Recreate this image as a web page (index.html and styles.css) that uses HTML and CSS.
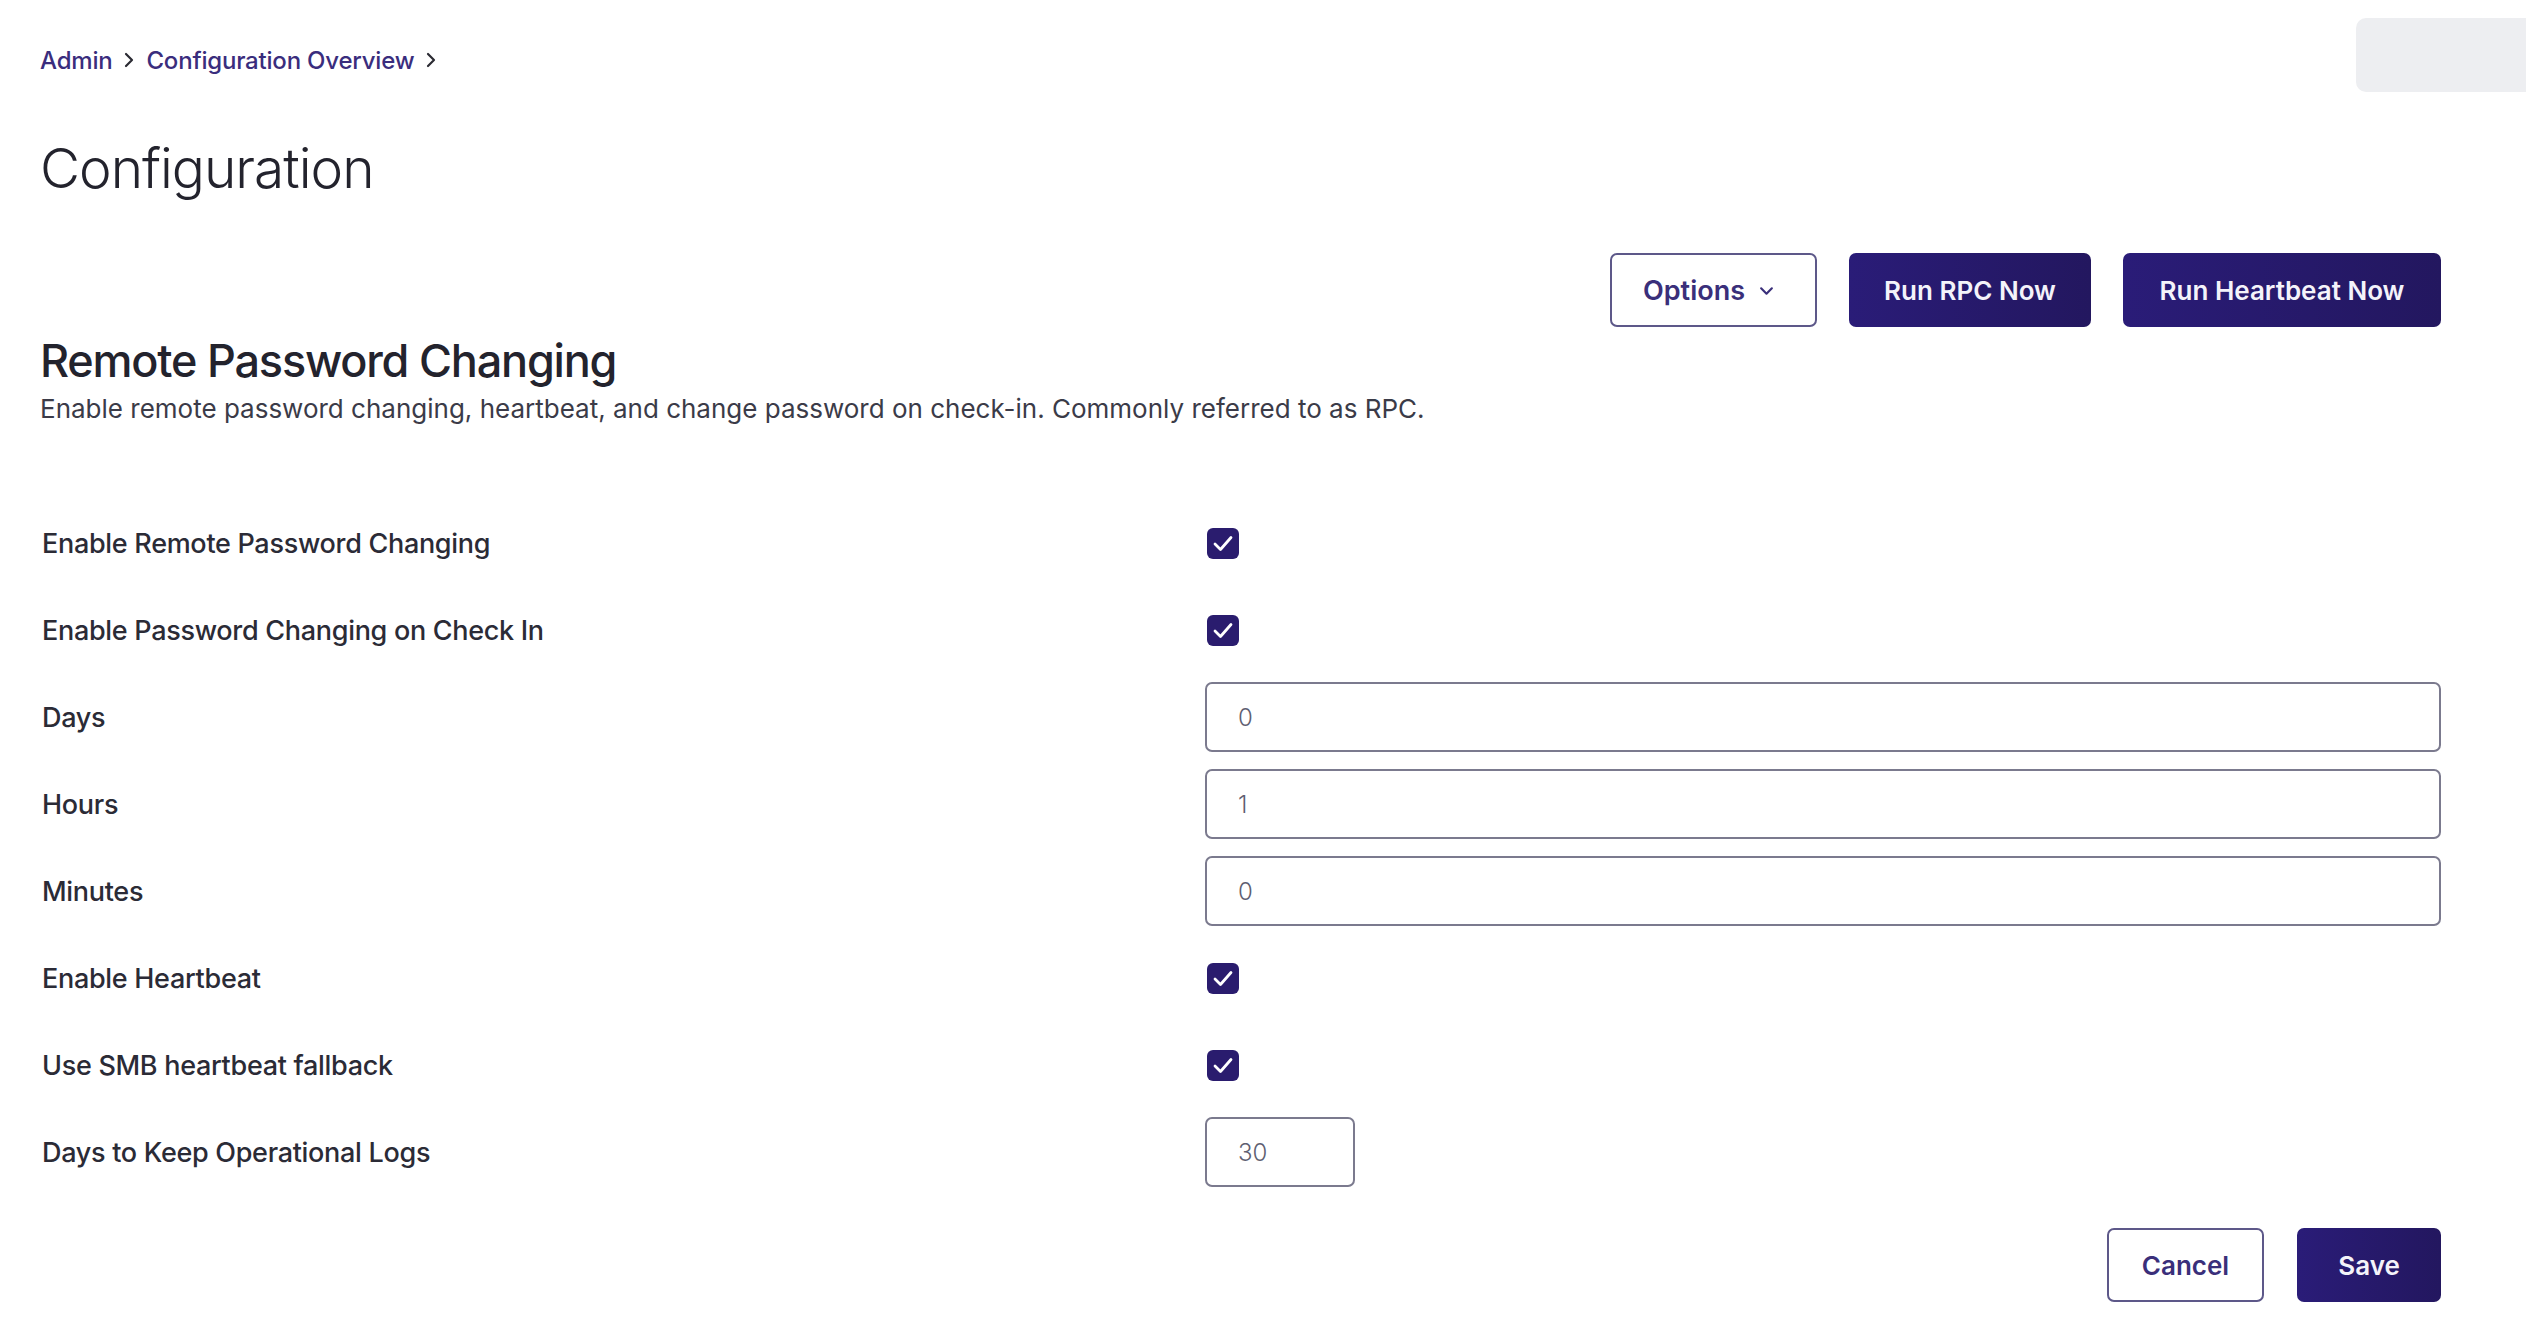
FILE: index.html
```html
<!DOCTYPE html>
<html lang="en">
<head>
<meta charset="utf-8">
<title>Configuration</title>
<link rel="stylesheet" href="styles.css">
</head>
<body>
<div class="page">
  <header class="topbar">
    <nav class="breadcrumb">
      <a class="crumb" href="#">Admin</a>
      <svg class="sep" viewBox="0 0 10 16" width="10" height="16"><polyline points="2,2 8,8 2,14" fill="none" stroke="#2b2b33" stroke-width="2.2" stroke-linecap="round" stroke-linejoin="round"/></svg>
      <a class="crumb" href="#">Configuration Overview</a>
      <svg class="sep" viewBox="0 0 10 16" width="10" height="16"><polyline points="2,2 8,8 2,14" fill="none" stroke="#2b2b33" stroke-width="2.2" stroke-linecap="round" stroke-linejoin="round"/></svg>
    </nav>
    <div class="search-stub"></div>
  </header>

  <h1 class="page-title">Configuration</h1>

  <div class="actions">
    <button class="btn btn-outline btn-options">Options
      <svg class="caret" viewBox="0 0 14 9" width="15" height="10"><polyline points="2,2 7,7 12,2" fill="none" stroke="#3a2f7a" stroke-width="2" stroke-linecap="round" stroke-linejoin="round"/></svg>
    </button>
    <button class="btn btn-primary btn-rpc">Run RPC Now</button>
    <button class="btn btn-primary btn-hb">Run Heartbeat Now</button>
  </div>

  <h2 class="section-title">Remote Password Changing</h2>
  <p class="section-desc">Enable remote password changing, heartbeat, and change password on check-in. Commonly referred to as RPC.</p>

  <div class="form">
    <div class="row"><label class="label">Enable Remote Password Changing</label><div class="field"><span class="check"><svg viewBox="0 0 32 31" width="32" height="31"><polyline points="8,16 13.5,21.5 24,9.5" fill="none" stroke="#fff" stroke-width="2.8" stroke-linecap="round" stroke-linejoin="round"/></svg></span></div></div>
    <div class="row"><label class="label">Enable Password Changing on Check In</label><div class="field"><span class="check"><svg viewBox="0 0 32 31" width="32" height="31"><polyline points="8,16 13.5,21.5 24,9.5" fill="none" stroke="#fff" stroke-width="2.8" stroke-linecap="round" stroke-linejoin="round"/></svg></span></div></div>
    <div class="row"><label class="label">Days</label><div class="field"><input class="input" type="text" value="0"></div></div>
    <div class="row"><label class="label">Hours</label><div class="field"><input class="input" type="text" value="1"></div></div>
    <div class="row"><label class="label">Minutes</label><div class="field"><input class="input" type="text" value="0"></div></div>
    <div class="row"><label class="label">Enable Heartbeat</label><div class="field"><span class="check"><svg viewBox="0 0 32 31" width="32" height="31"><polyline points="8,16 13.5,21.5 24,9.5" fill="none" stroke="#fff" stroke-width="2.8" stroke-linecap="round" stroke-linejoin="round"/></svg></span></div></div>
    <div class="row"><label class="label">Use SMB heartbeat fallback</label><div class="field"><span class="check"><svg viewBox="0 0 32 31" width="32" height="31"><polyline points="8,16 13.5,21.5 24,9.5" fill="none" stroke="#fff" stroke-width="2.8" stroke-linecap="round" stroke-linejoin="round"/></svg></span></div></div>
    <div class="row"><label class="label">Days to Keep Operational Logs</label><div class="field"><input class="input input-short" type="text" value="30"></div></div>
  </div>

  <div class="footer-actions">
    <button class="btn btn-outline btn-cancel">Cancel</button>
    <button class="btn btn-primary btn-save">Save</button>
  </div>
</div>
</body>
</html>
```

FILE: styles.css
```css
* { box-sizing: border-box; }
html, body { margin: 0; padding: 0; background: #fff; overflow: hidden; }
body {
  font-family: Inter, "Noto Sans", sans-serif;
  color: #2a2a35;
}
.page {
  padding: 18px 85px 0 40px;
  width: 2526px;
}
.topbar {
  display: flex;
  justify-content: space-between;
  align-items: flex-start;
  height: 74px;
}
.breadcrumb {
  display: flex;
  align-items: center;
  gap: 12px;
  margin-top: 28px;
  height: 28px;
}
.crumb {
  font-size: 24px;
  font-weight: 500;
  color: #3a2d7d;
  text-decoration: none;
  letter-spacing: -0.2px;
}
.sep { margin: 0; }
.search-stub {
  width: 190px;
  height: 74px;
  margin-right: -105px;
  background: #edeef1;
  border-radius: 10px 0 0 10px;
}
.page-title {
  margin: 44px 0 0 0;
  font-size: 55px;
  line-height: 64px;
  font-weight: 300;
  letter-spacing: -1px;
  color: #23232d;
}
.actions {
  display: flex;
  justify-content: flex-end;
  gap: 32px;
  margin-top: 53px;
}
.btn {
  height: 74px;
  border-radius: 7px;
  font-family: Inter, "Noto Sans", sans-serif;
  font-size: 26px;
  font-weight: 600;
  padding: 0 33px;
  display: inline-flex;
  align-items: center;
  justify-content: center;
  cursor: pointer;
}
.btn-outline {
  background: #fff;
  border: 2px solid #5d5889;
  color: #3a2f7a;
}
.btn-primary {
  background: linear-gradient(90deg, #2a1c78 0%, #23175f 100%);
  border: 0;
  color: #f4f3fa;
}
.btn-options {
  width: 207px;
  justify-content: flex-start;
  padding-left: 31px;
  font-size: 27px;
}
.btn-rpc { width: 242px; }
.btn-hb { width: 318px; }
.caret { margin-left: 14px; margin-top: 2px; }
.section-title {
  margin: 8px 0 0 0;
  font-size: 45px;
  line-height: 52px;
  font-weight: 500;
  letter-spacing: -1.2px;
  color: #23232d;
}
.section-desc {
  margin: 5px 0 0 0;
  font-size: 26px;
  line-height: 34px;
  color: #3b3b48;
  letter-spacing: 0;
}
.form {
  margin-top: 82px;
  display: flex;
  flex-direction: column;
  gap: 17px;
}
.row {
  display: grid;
  grid-template-columns: 1165px 1fr;
  align-items: center;
  height: 70px;
}
.label {
  padding-left: 2px;
  font-size: 27px;
  font-weight: 500;
  color: #2b2b36;
  letter-spacing: -0.3px;
}
.field { display: flex; align-items: center; }
.check {
  width: 32px;
  height: 31px;
  margin-left: 2px;
  border-radius: 6px;
  background: #2a1c6e;
  display: inline-flex;
}
.input {
  width: 100%;
  height: 70px;
  border: 2px solid #7b7a8e;
  border-radius: 7px;
  padding: 0 31px;
  font-family: Inter, "Noto Sans", sans-serif;
  font-size: 24px;
  font-weight: 300;
  color: #5f5f72;
  background: #fff;
  outline: none;
}
.input-short { width: 150px; }
.footer-actions {
  display: flex;
  justify-content: flex-end;
  gap: 33px;
  margin-top: 41px;
}
.btn-cancel { width: 157px; }
.btn-save { width: 144px; }
```
